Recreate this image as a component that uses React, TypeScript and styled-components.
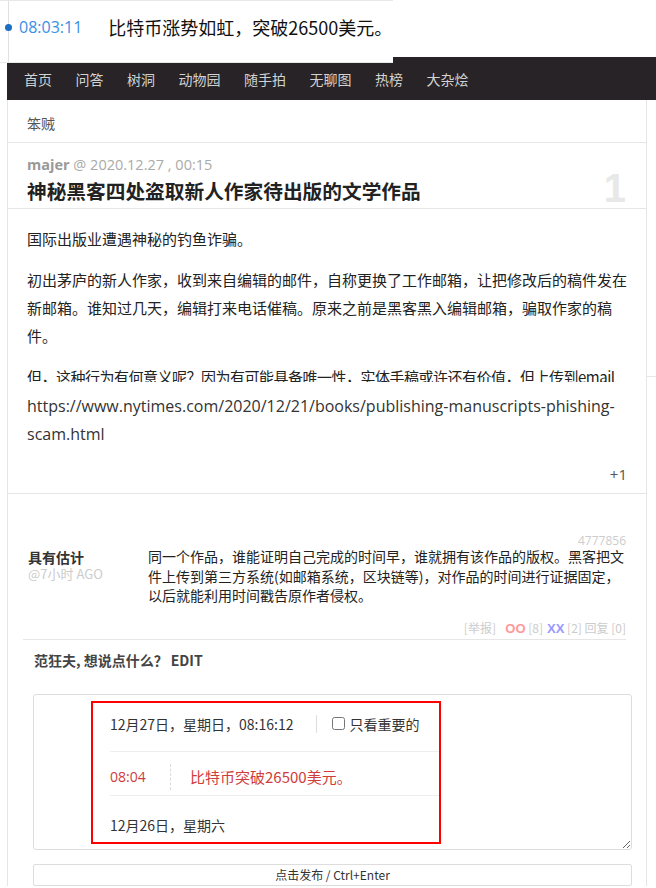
import styled, { createGlobalStyle } from 'styled-components';

const GlobalStyle = createGlobalStyle`
  html, body { margin: 0; padding: 0; background: #fff; }
  body {
    font-family: "Open Sans", "Noto Sans CJK SC", sans-serif;
    color: #333;
  }
  * { box-sizing: border-box; }
`;

const cjk = `"Noto Sans CJK SC", "Open Sans", sans-serif`;

const Page = styled.div`
  position: relative;
  width: 656px;
  height: 888px;
  overflow: hidden;
  padding-top: 57px;
`;

/* floating timeline toast over the top of the page */
const Toast = styled.div`
  position: absolute;
  top: 0;
  left: 0;
  z-index: 2;
  width: 393px;
  height: 63px;
  padding-bottom: 9px;
  background: #fff;
  border-top: 1px solid #e8e8e8;
  border-bottom: 1px solid #e8e8e8;
  display: flex;
  align-items: center;
  &::before {
    content: '';
    position: absolute;
    left: 8px;
    top: 0;
    bottom: 0;
    border-left: 1px solid #e0e0e0;
  }
`;
const Dot = styled.span`
  position: relative;
  z-index: 1;
  width: 7px;
  height: 7px;
  margin-left: 5px;
  border-radius: 50%;
  background: #1b6fc2;
`;
const ToastTime = styled.span`
  margin: 0 26px 0 7px;
  font-size: 16px;
  color: #3a8ee6;
`;
const ToastText = styled.span`
  font-family: ${cjk};
  font-size: 18px;
  color: #111;
`;

const Nav = styled.nav`
  margin-left: 7px;
  height: 43px;
  padding-left: 17px;
  background: #272326;
  display: flex;
  align-items: center;
`;
const NavItem = styled.a`
  margin-right: 23.5px;
  font-family: ${cjk};
  font-size: 14px;
  line-height: 20px;
  color: #d2d2d2;
  text-decoration: none;
`;

const Body = styled.div`
  display: flex;
`;
const Main = styled.main`
  margin-left: 7px;
  width: 640px;
  border-left: 1px solid #e6e6e6;
  border-right: 1px solid #e6e6e6;
`;
const Side = styled.aside`
  flex: 1;
`;
const SideRule = styled.div`
  margin-top: 276px;
  border-top: 1px solid #e6e6e6;
`;

const Crumb = styled.div`
  height: 43px;
  padding: 3px 0 0 19px;
  line-height: 40px;
  font-family: ${cjk};
  font-size: 14px;
  color: #555;
  border-bottom: 1px solid #e6e6e6;
`;

const PostHeader = styled.header`
  position: relative;
  padding: 14px 19px 3px;
  border-bottom: 1px solid #e6e6e6;
`;
const Meta = styled.div`
  font-size: 14.5px;
  line-height: 16px;
  color: #aaa;
  b { color: #999; }
`;
const Title = styled.h1`
  margin: 4px 0 0;
  font-family: ${cjk};
  font-size: 19.7px;
  font-weight: 700;
  line-height: 28px;
  color: #222;
`;
const Rank = styled.span`
  position: absolute;
  right: 20px;
  top: 23px;
  font-family: "Liberation Sans", sans-serif;
  font-size: 40px;
  font-weight: 700;
  line-height: 44px;
  color: #e8e8e8;
`;

const Content = styled.section`
  padding: 0 19px 9px 19px;
  border-bottom: 1px solid #e6e6e6;
`;
const Clip = styled.div`
  height: 173px;
  padding-top: 16px;
  overflow: hidden;
`;
const Para = styled.p<{ $tight?: boolean }>`
  margin: 0 0 13px;
  font-family: ${cjk};
  font-size: 15px;
  line-height: 28px;
  letter-spacing: ${({ $tight }) => ($tight ? '-0.5px' : 'normal')};
  color: #222;
`;
const Link = styled.p`
  margin: 10px 0 0;
  font-size: 16px;
  line-height: 28px;
  color: #333;
`;
const Vote = styled.div`
  margin-top: 16px;
  text-align: right;
  font-size: 15px;
  line-height: 20px;
  color: #555;
`;

const Comments = styled.section`
  padding: 41px 20px 0 15px;
`;
const CommentId = styled.div`
  text-align: right;
  font-size: 12px;
  line-height: 12px;
  color: #ccc;
`;
const CommentRow = styled.div`
  display: flex;
`;
const Author = styled.div`
  width: 125px;
  padding-left: 5px;
  flex-shrink: 0;
`;
const AuthorName = styled.div`
  font-family: ${cjk};
  font-size: 14px;
  font-weight: 700;
  line-height: 20px;
  color: #333;
`;
const AuthorTime = styled.div`
  font-family: ${cjk};
  font-size: 13px;
  line-height: 14px;
  color: #ccc;
`;
const CommentText = styled.div`
  flex: 1;
  font-family: ${cjk};
  font-size: 14px;
  line-height: 19.5px;
  color: #222;
`;
const CommentFoot = styled.div`
  margin-top: 14px;
  padding-bottom: 2px;
  border-bottom: 1px solid #e6e6e6;
  text-align: right;
  font-family: ${cjk};
  font-size: 12px;
  line-height: 16px;
  color: #ccc;
`;
const Tally = styled.b<{ $tone: string }>`
  margin-left: 4px;
  font-family: "Liberation Sans", sans-serif;
  font-size: 13px;
  color: ${({ $tone }) => $tone};
`;

const Form = styled.section`
  padding: 0 14px 0 25px;
`;
const FormTitle = styled.div`
  margin: 10px 0 24px 1px;
  font-family: ${cjk};
  font-size: 14px;
  font-weight: 700;
  line-height: 20px;
  color: #444;
  span { margin-left: 3px; }
`;
const Editor = styled.div`
  height: 156px;
  border: 1px solid #ddd;
  border-radius: 3px;
  background: #fff;
  resize: vertical;
  overflow: hidden;
`;
const Snapshot = styled.div`
  width: 350px;
  height: 143px;
  margin: 6px 0 0 57px;
  padding-left: 17px;
  border: 2px solid #f00;
  overflow: hidden;
  font-family: ${cjk};
  font-size: 14px;
  color: #333;
`;
const DayRow = styled.div<{ $top: number; $bottom: number; $line?: boolean }>`
  display: flex;
  align-items: center;
  padding: ${({ $top, $bottom }) => `${$top}px 0 ${$bottom}px`};
  line-height: 20px;
  border-bottom: ${({ $line }) => ($line ? '1px solid #eee' : 'none')};
`;
const Sep = styled.span`
  height: 18px;
  margin: 0 15px 0 23px;
  border-left: 1px solid #ddd;
`;
const Check = styled.label`
  display: flex;
  align-items: center;
  input { margin: 0 4px 0 0; width: 13px; height: 13px; }
`;
const EventTime = styled.span`
  width: 60px;
  font-family: "Open Sans", sans-serif;
  font-size: 14px;
  color: #d03c3c;
`;
const EventText = styled.span`
  padding-left: 19px;
  border-left: 1px dashed #ddd;
  font-size: 15px;
  line-height: 26px;
  color: #d03c3c;
`;

const Submit = styled.button`
  display: block;
  width: 100%;
  height: 22px;
  margin-top: 14px;
  padding: 0;
  border: 1px solid #ddd;
  border-radius: 2px;
  background: #fff;
  font-family: ${cjk};
  font-size: 12px;
  color: #333;
`;

const navItems = ['首页', '问答', '树洞', '动物园', '随手拍', '无聊图', '热榜', '大杂烩'];

export default function App() {
  return (
    <Page>
      <GlobalStyle />
      <Toast>
        <Dot />
        <ToastTime>08:03:11</ToastTime>
        <ToastText>比特币涨势如虹，突破26500美元。</ToastText>
      </Toast>

      <Nav>
        {navItems.map((n) => (
          <NavItem key={n}>{n}</NavItem>
        ))}
      </Nav>

      <Body>
        <Main>
          <Crumb>笨贼</Crumb>

          <PostHeader>
            <Meta>
              <b>majer</b> @ 2020.12.27 , 00:15
            </Meta>
            <Title>神秘黑客四处盗取新人作家待出版的文学作品</Title>
            <Rank>1</Rank>
          </PostHeader>

          <Content>
            <Clip>
              <Para>国际出版业遭遇神秘的钓鱼诈骗。</Para>
              <Para>
                初出茅庐的新人作家，收到来自编辑的邮件，自称更换了工作邮箱，让把修改后的稿件发在新邮箱。谁知过几天，编辑打来电话催稿。原来之前是黑客黑入编辑邮箱，骗取作家的稿件。
              </Para>
              <Para $tight>但，这种行为有何意义呢？因为有可能具备唯一性，实体手稿或许还有价值，但上传到email</Para>
            </Clip>
            <Link>https://www.nytimes.com/2020/12/21/books/publishing-manuscripts-phishing-scam.html</Link>
            <Vote>+1</Vote>
          </Content>

          <Comments>
            <CommentId>4777856</CommentId>
            <CommentRow>
              <Author>
                <AuthorName>具有估计</AuthorName>
                <AuthorTime>@7小时 AGO</AuthorTime>
              </Author>
              <CommentText>
                同一个作品，谁能证明自己完成的时间早，谁就拥有该作品的版权。黑客把文件上传到第三方系统(如邮箱系统，区块链等)，对作品的时间进行证据固定，以后就能利用时间戳告原作者侵权。
              </CommentText>
            </CommentRow>
            <CommentFoot>
              [举报] &nbsp;
              <Tally $tone="#f99">OO</Tally> [8]
              <Tally $tone="#99f">XX</Tally> [2] 回复 [0]
            </CommentFoot>
          </Comments>

          <Form>
            <FormTitle>
              范狂夫, 想说点什么？<span>EDIT</span>
            </FormTitle>
            <Editor>
              <Snapshot>
                <DayRow $top={11} $bottom={17} $line>
                  12月27日，星期日，08:16:12
                  <Sep />
                  <Check>
                    <input type="checkbox" />
                    只看重要的
                  </Check>
                </DayRow>
                <DayRow $top={12} $bottom={5} $line>
                  <EventTime>08:04</EventTime>
                  <EventText>比特币突破26500美元。</EventText>
                </DayRow>
                <DayRow $top={19} $bottom={0}>
                  12月26日，星期六
                </DayRow>
              </Snapshot>
            </Editor>
            <Submit>点击发布 / Ctrl+Enter</Submit>
          </Form>
        </Main>
        <Side>
          <SideRule />
        </Side>
      </Body>
    </Page>
  );
}
